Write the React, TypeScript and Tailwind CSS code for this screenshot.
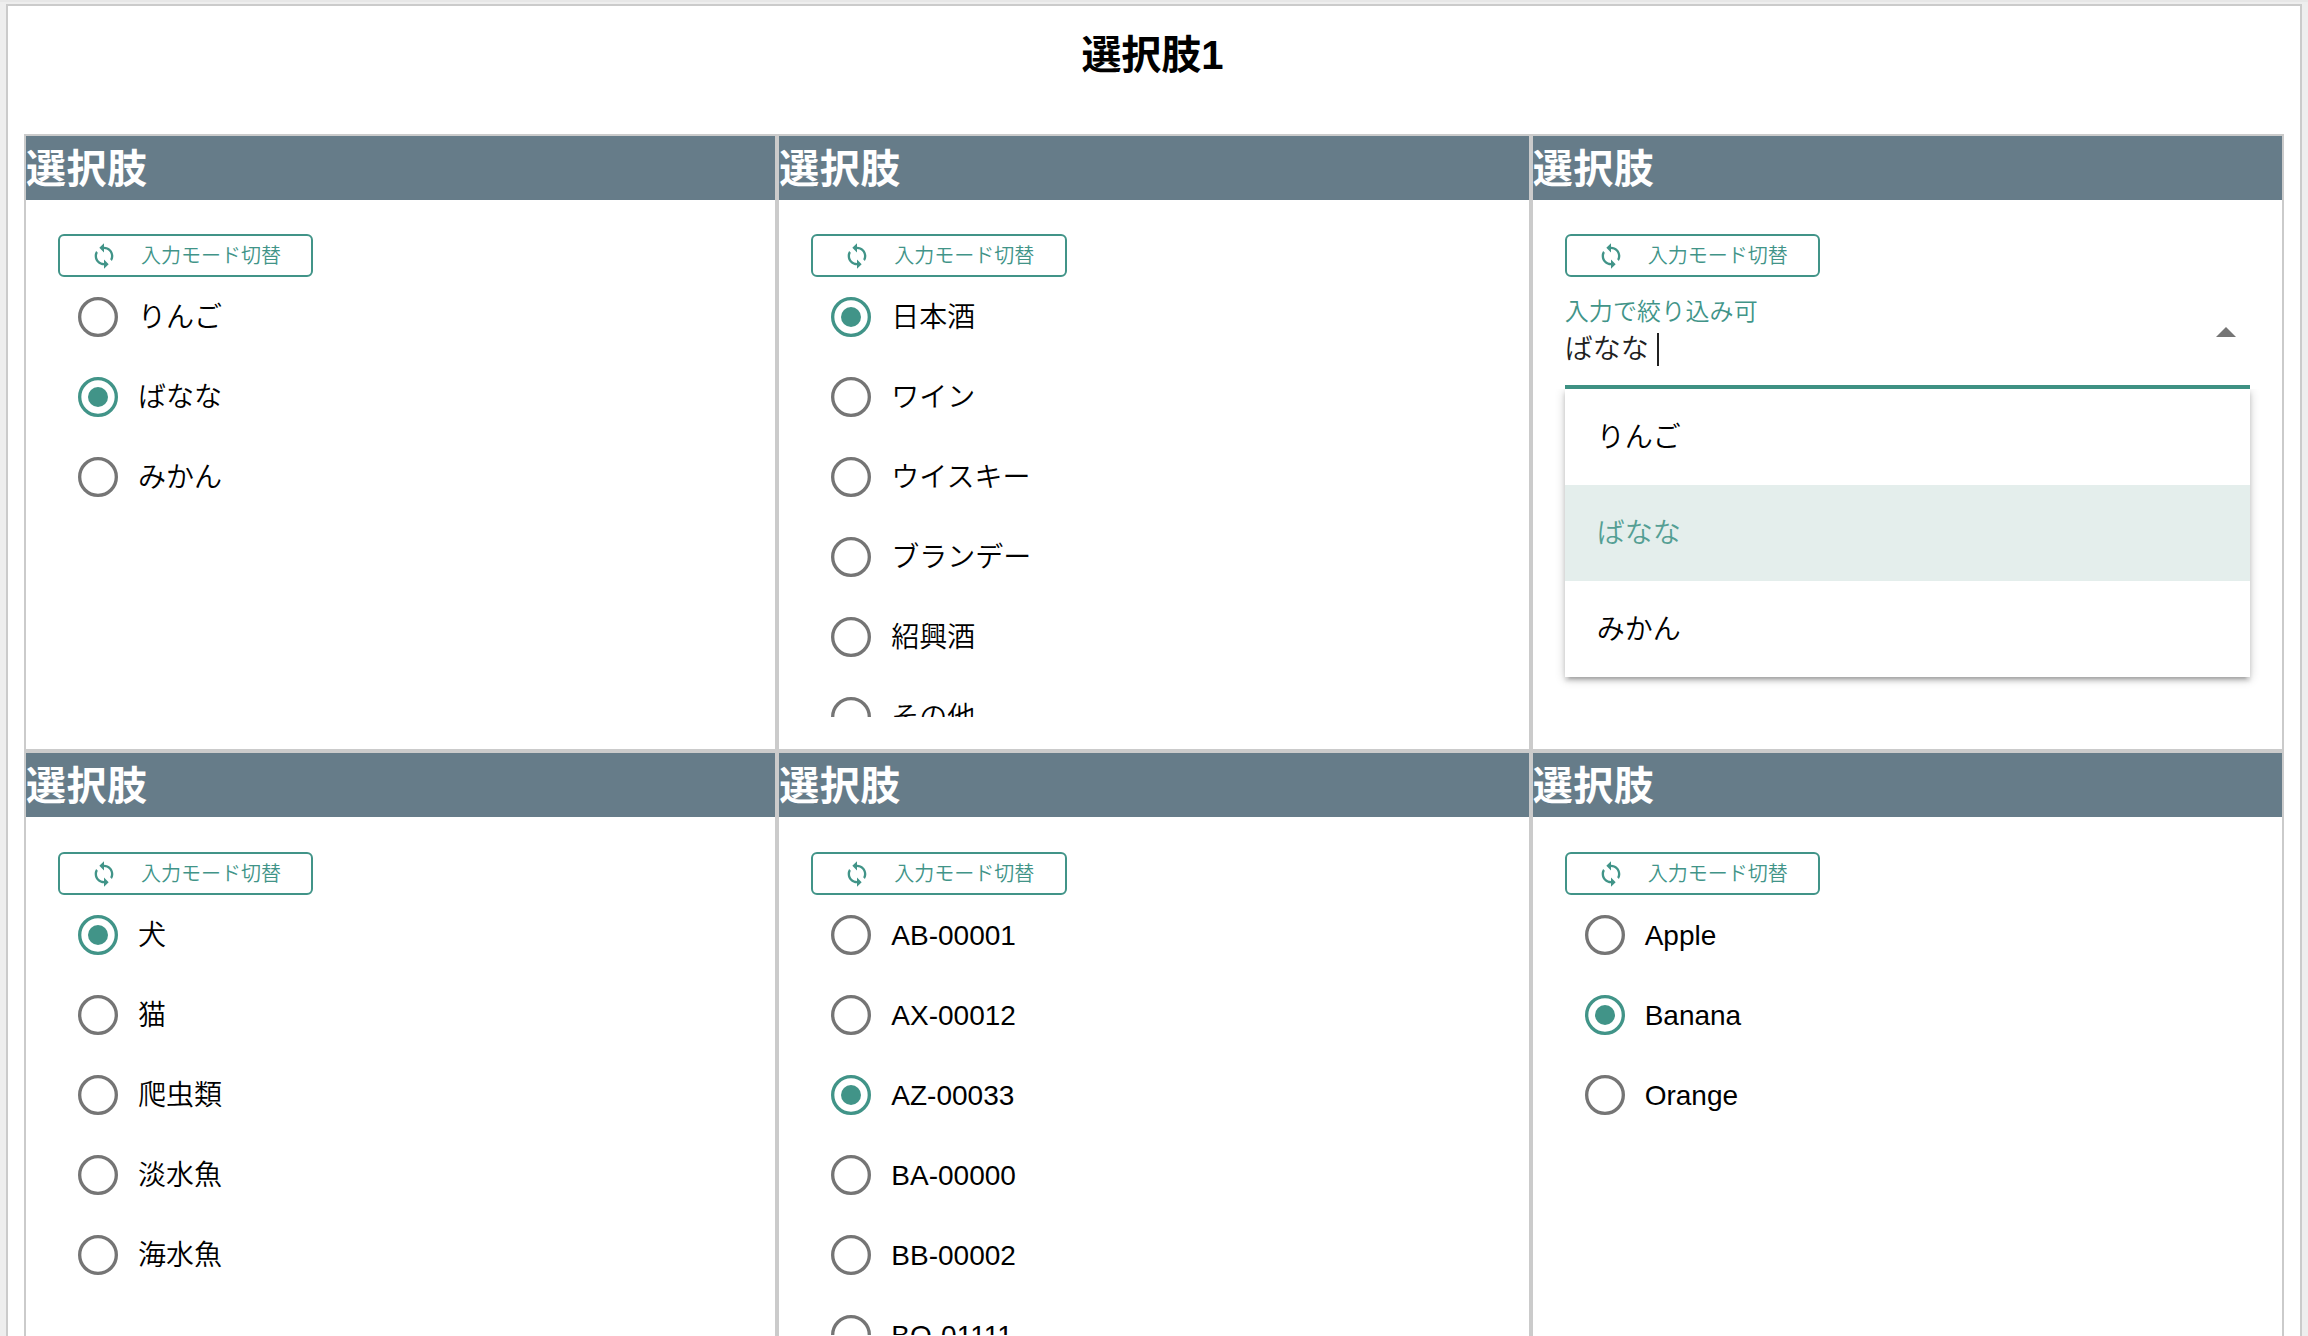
import React from "react";

type Item = { label: string; on?: boolean };

function ModeButton() {
  return (
    <button
      type="button"
      className="flex h-[43px] w-[255.33px] shrink-0 items-center rounded-[6px] border-2 border-[#419488] pl-[30px] text-[20px] font-[350] leading-none text-[#419488]"
    >
      <svg viewBox="0 0 24 24" className="mr-[23px] size-7 shrink-0 fill-current">
        <path d="M12 4V1L8 5l4 4V6c3.31 0 6 2.69 6 6 0 1.01-.25 1.97-.7 2.8l1.46 1.46C19.54 15.03 20 13.57 20 12c0-4.42-3.58-8-8-8zm0 14c-3.31 0-6-2.69-6-6 0-1.01.25-1.97.7-2.8L5.24 7.74C4.46 8.97 4 10.43 4 12c0 4.42 3.58 8 8 8v3l4-4-4-4v3z" />
      </svg>
      <span className="whitespace-nowrap pt-px">入力モード切替</span>
    </button>
  );
}

function Radio({ label, on }: Item) {
  return (
    <div className="flex h-20 shrink-0 items-center">
      <div className="flex w-20 shrink-0 justify-center">
        <svg viewBox="0 0 24 24" className={on ? "size-10 text-[#419488]" : "size-10 text-[#757575]"}>
          <circle cx="12" cy="12" r="11" fill="none" stroke="currentColor" strokeWidth="2" />
          {on && <circle cx="12" cy="12" r="6" fill="currentColor" />}
        </svg>
      </div>
      <span className="whitespace-nowrap pt-[2px] text-[28px] font-[350] leading-none text-black">{label}</span>
    </div>
  );
}

function Panel({ children, lower }: { children: React.ReactNode; lower?: boolean }) {
  return (
    <section className="flex min-w-0 flex-col overflow-hidden border-2 border-[#cbcbcb] bg-white">
      <h2 className="flex h-16 shrink-0 items-center bg-[#667c89] pt-[2px] text-[40px] font-bold leading-none tracking-[0.5px] text-white">
        選択肢
      </h2>
      <div className={lower ? "flex flex-col px-8 pt-[35px]" : "flex flex-col px-8 pt-[34px]"}>
        <ModeButton />
        {children}
      </div>
    </section>
  );
}

function RadioPanel({ items, lower }: { items: Item[]; lower?: boolean }) {
  return (
    <Panel lower={lower}>
      <div className="flex h-[440px] flex-col overflow-hidden">
        {items.map((item) => (
          <Radio key={item.label} {...item} />
        ))}
      </div>
    </Panel>
  );
}

function ComboPanel() {
  return (
    <Panel>
      <div className="relative">
        <div className="flex h-[112px] items-center justify-between border-b-4 border-[#3e9183]">
          <div className="flex h-full flex-col pt-[23px]">
            <span className="text-[24px] font-[350] leading-[24px] tracking-[0.15px] text-[#419488]">
              入力で絞り込み可
            </span>
            <span className="mt-[9px] flex h-[33px] items-center text-[28px] font-[350] leading-none text-[#212121]">
              ばなな
              <span className="ml-[8px] h-full w-[2px] bg-[#212121]" />
            </span>
          </div>
          <span className="mr-[14px] mt-[2px] h-[10px] w-5 bg-[#757575] [clip-path:polygon(50%_0,100%_100%,0_100%)]" />
        </div>
        <ul className="absolute inset-x-0 top-full bg-white text-[28px] font-[350] leading-none text-black shadow-[0_2px_10px_rgba(0,0,0,0.2),0_4px_4px_rgba(0,0,0,0.14),0_6px_2px_-4px_rgba(0,0,0,0.12)] [clip-path:inset(0_-20px_-20px_-20px)]">
          <li className="flex h-24 items-center px-8 pt-[2px]">りんご</li>
          <li className="flex h-24 items-center bg-[#e4eeec] px-8 pt-[2px] text-[#549f94]">ばなな</li>
          <li className="flex h-24 items-center px-8 pt-[2px]">みかん</li>
        </ul>
      </div>
    </Panel>
  );
}

const fruits: Item[] = [{ label: "りんご" }, { label: "ばなな", on: true }, { label: "みかん" }];
const drinks: Item[] = [
  { label: "日本酒", on: true },
  { label: "ワイン" },
  { label: "ウイスキー" },
  { label: "ブランデー" },
  { label: "紹興酒" },
  { label: "その他" },
];
const animals: Item[] = [
  { label: "犬", on: true },
  { label: "猫" },
  { label: "爬虫類" },
  { label: "淡水魚" },
  { label: "海水魚" },
];
const codes: Item[] = [
  { label: "AB-00001" },
  { label: "AX-00012" },
  { label: "AZ-00033", on: true },
  { label: "BA-00000" },
  { label: "BB-00002" },
  { label: "BO-01111" },
];
const english: Item[] = [{ label: "Apple" }, { label: "Banana", on: true }, { label: "Orange" }];

export default function App() {
  return (
    <div
      lang="ja"
      className="h-[1336px] overflow-hidden border-t-2 border-[#e7e7e7] bg-[#eeeeee] px-[6px] pt-[2px] font-['Liberation_Sans','Noto_Sans_CJK_JP',sans-serif]"
    >
      <main className="flex h-[1400px] flex-col border-2 border-[#cbcbcb] bg-white px-4">
        <h1 className="flex h-32 shrink-0 items-start justify-center pr-[3px] pt-[29px] text-[40px] font-bold leading-[40px] text-black">
          選択肢1
        </h1>
        <div className="grid w-[2260px] grid-cols-3 grid-rows-[617px_617px]">
          <RadioPanel items={fruits} />
          <RadioPanel items={drinks} />
          <ComboPanel />
          <RadioPanel items={animals} lower />
          <RadioPanel items={codes} lower />
          <RadioPanel items={english} lower />
        </div>
      </main>
    </div>
  );
}
